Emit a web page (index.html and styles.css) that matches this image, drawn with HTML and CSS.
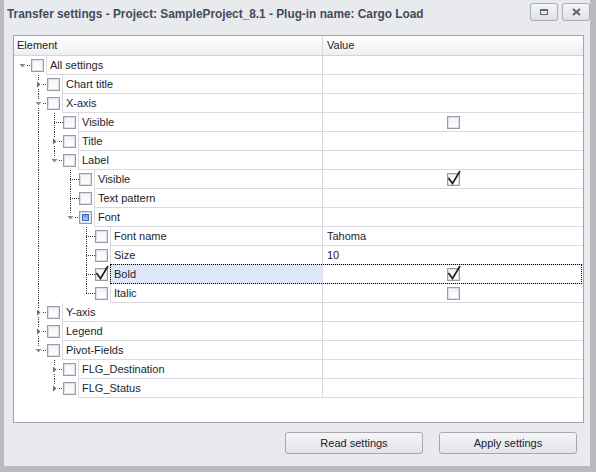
FILE: index.html
```html
<!DOCTYPE html>
<html lang="en">
<head>
  <meta charset="UTF-8">
  <title>Transfer settings</title>
  <link rel="stylesheet" href="styles.css">
</head>
<body>

<div class="window">
  <div class="titlebar">
    <span class="title">Transfer settings - Project: SampleProject_8.1 - Plug-in name: Cargo Load</span>
    <button class="tb-btn"><span class="restore"></span></button>
    <button class="tb-btn">
      <svg width="9" height="8" viewBox="0 0 9 8"><path d="M1 1L8 7M8 1L1 7" stroke="#5c6270" stroke-width="2"/></svg>
    </button>
  </div>

  <div class="grid">
    <div class="head">
      <div class="hd-el">Element</div>
      <div class="hd-val">Value</div>
    </div>

    <!-- All settings -->
    <div class="row">
      <div class="el">
        <span class="g h node"><i class="arr open"></i></span>
        <span class="g"><span class="cb"></span></span>
        <span class="cell">All settings</span>
      </div>
      <div class="val"></div>
    </div>

    <div class="row">
      <div class="el">
        <span class="g"></span>
        <span class="g t node"><i class="arr shut"></i></span>
        <span class="g"><span class="cb"></span></span>
        <span class="cell">Chart title</span>
      </div>
      <div class="val"></div>
    </div>

    <div class="row">
      <div class="el">
        <span class="g"></span>
        <span class="g t node"><i class="arr open"></i></span>
        <span class="g"><span class="cb"></span></span>
        <span class="cell">X-axis</span>
      </div>
      <div class="val"></div>
    </div>

    <div class="row">
      <div class="el">
        <span class="g"></span>
        <span class="g v"></span>
        <span class="g t"></span>
        <span class="g"><span class="cb"></span></span>
        <span class="cell">Visible</span>
      </div>
      <div class="val center"><span class="cb"></span></div>
    </div>

    <div class="row">
      <div class="el">
        <span class="g"></span>
        <span class="g v"></span>
        <span class="g t node"><i class="arr shut"></i></span>
        <span class="g"><span class="cb"></span></span>
        <span class="cell">Title</span>
      </div>
      <div class="val"></div>
    </div>

    <div class="row">
      <div class="el">
        <span class="g"></span>
        <span class="g v"></span>
        <span class="g l node"><i class="arr open"></i></span>
        <span class="g"><span class="cb"></span></span>
        <span class="cell">Label</span>
      </div>
      <div class="val"></div>
    </div>

    <div class="row">
      <div class="el">
        <span class="g"></span>
        <span class="g v"></span>
        <span class="g"></span>
        <span class="g t"></span>
        <span class="g"><span class="cb"></span></span>
        <span class="cell">Visible</span>
      </div>
      <div class="val center">
        <span class="cb"><svg class="tick" width="16" height="17" viewBox="0 0 16 17"><path d="M1.5 8L5.5 13.5L13 1" fill="none" stroke="#1a1a1a" stroke-width="1.6"/></svg></span>
      </div>
    </div>

    <div class="row">
      <div class="el">
        <span class="g"></span>
        <span class="g v"></span>
        <span class="g"></span>
        <span class="g t"></span>
        <span class="g"><span class="cb"></span></span>
        <span class="cell">Text pattern</span>
      </div>
      <div class="val"></div>
    </div>

    <div class="row">
      <div class="el">
        <span class="g"></span>
        <span class="g v"></span>
        <span class="g"></span>
        <span class="g l node"><i class="arr open"></i></span>
        <span class="g"><span class="cb mixed"></span></span>
        <span class="cell">Font</span>
      </div>
      <div class="val"></div>
    </div>

    <div class="row">
      <div class="el">
        <span class="g"></span>
        <span class="g v"></span>
        <span class="g"></span>
        <span class="g"></span>
        <span class="g t"></span>
        <span class="g"><span class="cb"></span></span>
        <span class="cell">Font name</span>
      </div>
      <div class="val">Tahoma</div>
    </div>

    <div class="row">
      <div class="el">
        <span class="g"></span>
        <span class="g v"></span>
        <span class="g"></span>
        <span class="g"></span>
        <span class="g t"></span>
        <span class="g"><span class="cb"></span></span>
        <span class="cell">Size</span>
      </div>
      <div class="val">10</div>
    </div>

    <div class="row sel">
      <div class="el">
        <span class="g"></span>
        <span class="g v"></span>
        <span class="g"></span>
        <span class="g"></span>
        <span class="g t"></span>
        <span class="g">
          <span class="cb"><svg class="tick" width="16" height="17" viewBox="0 0 16 17"><path d="M1.5 8L5.5 13.5L13 1" fill="none" stroke="#1a1a1a" stroke-width="1.6"/></svg></span>
        </span>
        <span class="cell">Bold</span>
      </div>
      <div class="val center">
        <span class="cb"><svg class="tick" width="16" height="17" viewBox="0 0 16 17"><path d="M1.5 8L5.5 13.5L13 1" fill="none" stroke="#1a1a1a" stroke-width="1.6"/></svg></span>
      </div>
      <span class="focus"></span>
    </div>

    <div class="row">
      <div class="el">
        <span class="g"></span>
        <span class="g v"></span>
        <span class="g"></span>
        <span class="g"></span>
        <span class="g l"></span>
        <span class="g"><span class="cb"></span></span>
        <span class="cell">Italic</span>
      </div>
      <div class="val center"><span class="cb"></span></div>
    </div>

    <div class="row">
      <div class="el">
        <span class="g"></span>
        <span class="g t node"><i class="arr shut"></i></span>
        <span class="g"><span class="cb"></span></span>
        <span class="cell">Y-axis</span>
      </div>
      <div class="val"></div>
    </div>

    <div class="row">
      <div class="el">
        <span class="g"></span>
        <span class="g t node"><i class="arr shut"></i></span>
        <span class="g"><span class="cb"></span></span>
        <span class="cell">Legend</span>
      </div>
      <div class="val"></div>
    </div>

    <div class="row">
      <div class="el">
        <span class="g"></span>
        <span class="g l node"><i class="arr open"></i></span>
        <span class="g"><span class="cb"></span></span>
        <span class="cell">Pivot-Fields</span>
      </div>
      <div class="val"></div>
    </div>

    <div class="row">
      <div class="el">
        <span class="g"></span>
        <span class="g"></span>
        <span class="g t node"><i class="arr shut"></i></span>
        <span class="g"><span class="cb"></span></span>
        <span class="cell">FLG_Destination</span>
      </div>
      <div class="val"></div>
    </div>

    <div class="row">
      <div class="el">
        <span class="g"></span>
        <span class="g"></span>
        <span class="g l node"><i class="arr shut"></i></span>
        <span class="g"><span class="cb"></span></span>
        <span class="cell">FLG_Status</span>
      </div>
      <div class="val"></div>
    </div>
  </div>

  <div class="footer">
    <button class="btn">Read settings</button>
    <button class="btn">Apply settings</button>
  </div>
</div>

</body>
</html>
```

FILE: styles.css
```css
body {
  margin: 0;
  font-family: "Liberation Sans", Arial, sans-serif;
  font-size: 11px;
  color: #1d1d2b;
}

.window {
  width: 596px;
  height: 472px;
  box-sizing: border-box;
  background: #e9eaee;
  border-left: 4px solid #b8bac0;
  border-right: 6px solid #b8bac0;
  border-bottom: 6px solid #b8bac0;
  display: flex;
  flex-direction: column;
}

/* title bar */
.titlebar {
  height: 26px;
  display: flex;
  align-items: flex-start;
}

.title {
  flex: 1;
  padding: 8px 0 0 3px;
  font-size: 11.85px;
  line-height: 13px;
  font-weight: bold;
  color: #434b5c;
}

.tb-btn {
  width: 28px;
  height: 18px;
  margin: 3px 0 0 4px;
  padding: 0;
  border: 1px solid #a9acb4;
  border-radius: 3px;
  background: linear-gradient(#f4f5f7, #dfe1e6);
  display: flex;
  align-items: center;
  justify-content: center;
}

.restore {
  width: 8px;
  height: 6px;
  box-sizing: border-box;
  border: 1px solid #5c6270;
  border-top-width: 2px;
}

/* tree grid */
.grid {
  margin: 9px 6px 0 9px;
  height: 388px;
  box-sizing: border-box;
  border: 1px solid #a2a4ac;
  background: white;
}

.head {
  display: flex;
  height: 20px;
  box-sizing: border-box;
  border-bottom: 1px solid #d2d3da;
  background: linear-gradient(#ffffff, #eeeff2);
  line-height: 19px;
}

.hd-el {
  width: 309px;
  box-sizing: border-box;
  border-right: 1px solid #d5d6dc;
  padding-left: 3px;
}

.hd-val {
  flex: 1;
  padding-left: 4px;
}

.row {
  position: relative;
  display: flex;
  height: 19px;
}

.el {
  width: 309px;
  display: flex;
  flex: none;
}

.cell {
  flex: 1;
  border-left: 1px solid #d9dae0;
  border-right: 1px solid #d9dae0;
  border-bottom: 1px solid #d9dae0;
  padding-left: 3px;
  line-height: 18px;
  white-space: nowrap;
}

.val {
  flex: 1;
  border-bottom: 1px solid #d9dae0;
  padding-left: 4px;
  line-height: 18px;
  display: flex;
  align-items: center;
}

.val.center {
  justify-content: center;
  padding-left: 0;
}

.row.sel .cell {
  background: #dfe8f9;
}

.focus {
  position: absolute;
  left: 96px;
  right: 1px;
  top: -1px;
  bottom: 0;
  border: 1px dotted #000;
}

/* tree columns and dotted lines */
.g {
  position: relative;
  width: 16px;
  flex: none;
  display: flex;
  align-items: center;
}

.v::before,
.t::before,
.l::before {
  content: '';
  position: absolute;
  left: 8px;
  top: 0;
  width: 1px;
  height: 19px;
  background: repeating-linear-gradient(to bottom, #3a3a3a 0 1px, transparent 1px 2px);
}

.l::before {
  height: 10px;
}

.t::after,
.l::after,
.h::after {
  content: '';
  position: absolute;
  left: 8px;
  top: 9px;
  width: 9px;
  height: 1px;
  background: repeating-linear-gradient(to right, #3a3a3a 0 1px, transparent 1px 2px);
}

.node::after {
  left: 13px;
  width: 4px;
}

.arr {
  position: absolute;
  left: 4px;
  top: 5px;
  width: 9px;
  height: 9px;
  background: white;
  display: flex;
  align-items: center;
  justify-content: center;
  z-index: 1;
}

.arr.open::before {
  content: '';
  width: 7px;
  height: 4px;
  background: #8c8c8c;
  clip-path: polygon(0 0, 100% 0, 50% 100%);
}

.arr.shut::before {
  content: '';
  width: 4px;
  height: 7px;
  background: #6e6e6e;
  clip-path: polygon(0 0, 100% 50%, 0 100%);
}

/* checkboxes */
.cb {
  position: relative;
  width: 13px;
  height: 13px;
  box-sizing: border-box;
  margin-left: 1px;
  border: 1px solid #9a9ba3;
  box-shadow: inset 0 0 0 1px #dedfe4;
  background: linear-gradient(#f4f4f6, #ffffff);
  flex: none;
}

.val .cb {
  margin-left: 0;
}

.cb.mixed::after {
  content: '';
  position: absolute;
  left: 2px;
  top: 2px;
  width: 7px;
  height: 7px;
  box-sizing: border-box;
  border: 1px solid #3e6bb6;
  background: linear-gradient(#6d9ae0, #a9c7f2);
}

.tick {
  position: absolute;
  left: -1px;
  top: -4px;
  overflow: visible;
}

/* footer buttons */
.footer {
  display: flex;
  justify-content: flex-end;
  gap: 16px;
  padding: 9px 13px 0 0;
}

.btn {
  width: 138px;
  height: 22px;
  border: 1px solid #a6a8b0;
  border-radius: 3px;
  background: linear-gradient(#f6f6f8, #e2e3e8);
  font-family: "Liberation Sans", Arial, sans-serif;
  font-size: 11px;
  color: #202030;
  padding: 0;
}
```
